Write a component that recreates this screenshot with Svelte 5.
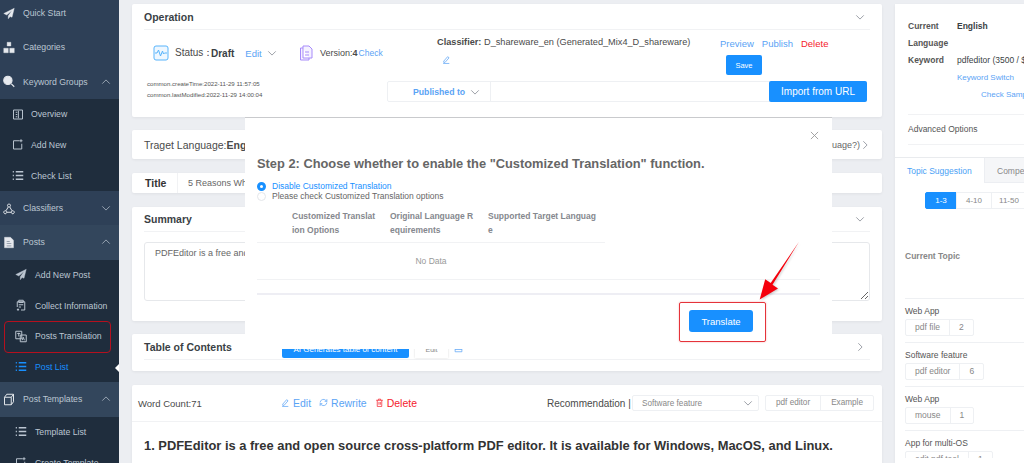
<script>
	const icons = {
		plane: 'M15 1 1 8l4 2 7-6-5 7v4l2.5-3 2.5 1z',
		tree: 'M5.5 1h5v5h-5zM1 9h6v6H1zM9 9h6v6H9z',
		search: 'M6.500 1a5.500 5.500 0 1 0 0 11 5.500 5.500 0 0 0 0-11zM10.500 10.500 15 15',
		box: 'M2 2h12v12H2zM5 5h2M5 8h2M5 11h2M8.5 3v10',
		add: 'M10 3H2v11h11V7M12 1v4M10 3h4',
		list: 'M1 3h1.5M5 3h10M1 8h1.5M5 8h10M1 13h1.5M5 13h10',
		nodes: 'M8 2a2 2 0 1 0 .01 0zM3 11a2 2 0 1 0 .01 0zM13 11a2 2 0 1 0 .01 0zM7 6l-3 5M9 6l3 5M5 13h6',
		doc: 'M2 1h8l4 4v10H2zM5 6h4v1H5zM5 9h6v1H5zM5 12h6v1H5z',
		clip: 'M3 3h10v11H8M5 1h6v3H5zM3 3v7M5 7h6M5 10h3M4 12v3M2.5 13.5h3',
		trans: 'M1 1h8v10H1zM7 6h8v9H7zM3 4h4M5 3v5M9.5 13l1.5-4 1.5 4',
		cube: 'M2 5h9v10H2zM2 5l3-4h9l-3 4M11 15l3-4V1'
	};

	const menu = [
		{ label: 'Quick Start', icon: 'plane', solid: true },
		{ label: 'Categories', icon: 'tree', solid: true },
		{
			label: 'Keyword Groups',
			icon: 'search',
			solid: true,
			arrow: 'up',
			narrow: true,
			children: [
				{ label: 'Overview', icon: 'box' },
				{ label: 'Add New', icon: 'add' },
				{ label: 'Check List', icon: 'list' }
			]
		},
		{ label: 'Classifiers', icon: 'nodes', arrow: 'down' },
		{
			label: 'Posts',
			icon: 'doc',
			solid: true,
			arrow: 'up',
			open: true,
			children: [
				{ label: 'Add New Post', icon: 'plane', solid: true },
				{ label: 'Collect Information', icon: 'clip' },
				{ label: 'Posts Translation', icon: 'trans' },
				{ label: 'Post List', icon: 'list', active: true }
			]
		},
		{
			label: 'Post Templates',
			icon: 'cube',
			arrow: 'up',
			open: true,
			children: [
				{ label: 'Template List', icon: 'list' },
				{ label: 'Create Template', icon: 'add' }
			]
		}
	];

	const topics = [
		{ group: 'Web App', name: 'pdf file', count: 2 },
		{ group: 'Software feature', name: 'pdf editor', count: 6 },
		{ group: 'Web App', name: 'mouse', count: 1 },
		{ group: 'App for multi-OS', name: 'edit pdf tool', count: 1 }
	];
</script>

{#snippet icon(name, solid = false)}
	<svg class="ico {name}" class:solid viewBox="0 0 16 16"><path d={icons[name]} fill-rule="evenodd" /></svg>
{/snippet}

{#snippet chevron(dir = 'down')}
	<svg class="chev {dir}" viewBox="0 0 12 12"><path d="M1.500 4 6 8.500 10.500 4" /></svg>
{/snippet}

<div class="page">
	<aside class="sidebar">
		{#each menu as item}
			<div class="item" class:open={item.open}>
				{@render icon(item.icon, item.solid)}
				<span>{item.label}</span>
				{#if item.arrow}{@render chevron(item.arrow)}{/if}
			</div>
			{#if item.children}
				<div class="sub" class:narrow={item.narrow}>
					{#each item.children as child}
						<div class="subitem" class:active={child.active}>
							{@render icon(child.icon, child.solid)}
							<span>{child.label}</span>
						</div>
					{/each}
				</div>
			{/if}
		{/each}
		<div class="ring"></div>
		<div class="notch"></div>
	</aside>

	<main class="main">
		<section class="card operation">
			<header class="head">
				<h3>Operation</h3>
				{@render chevron('down')}
			</header>
			<div class="op-top">
				<div class="status">
					<svg class="big" viewBox="0 0 16 16">
						<rect x="1" y="1" width="14" height="14" rx="2" stroke="#58b4fb" fill="#eef7ff" />
						<path d="M2 8h2l1.500-3 2 6 2-5 1 3 1-1h2.500" stroke="#58b4fb" fill="none" />
					</svg>
					<span class="status-label">Status：</span>
					<b>Draft</b>
					<a class="link edit">Edit</a>
					{@render chevron('down')}
				</div>
				<div class="version">
					<svg class="big" viewBox="0 0 16 16">
						<path d="M5 1h6l3 3v9H5zM5 3H2.500v12H11v-2M7 7h4M7 10h4" stroke="#a78bfa" fill="#f5f2ff" />
					</svg>
					<span>Version:<b>4</b></span><a class="link">Check</a>
				</div>
				<div class="classifier">
					<div><b>Classifier:</b> D_shareware_en (Generated_Mix4_D_shareware)</div>
					<svg class="pen" viewBox="0 0 16 16"><path d="M3 11 10 3l2.500 2-7 8H3zM2 15h11" /></svg>
				</div>
				<div class="actions">
					<div class="action-links">
						<a class="link">Preview</a>
						<a class="link">Publish</a>
						<a class="danger">Delete</a>
					</div>
					<button class="btn save">Save</button>
				</div>
			</div>
			<div class="op-bottom">
				<div class="dates">
					<div>common.createTime:2022-11-29 11:57:05</div>
					<div>common.lastModified:2022-11-29 14:00:04</div>
				</div>
				<div class="publish-bar">
					<div class="published"><b>Published to</b>{@render chevron('down')}</div>
					<button class="btn import">Import from URL</button>
				</div>
			</div>
		</section>

		<section class="card target">
			<span>Traget Language:<b>English</b></span>
			<span class="target-side">(Change Target Language?){@render chevron('side')}</span>
		</section>

		<section class="card title-row">
			<b>Title</b>
			<span>5 Reasons Why You Should Use PDFEditor</span>
		</section>

		<section class="card summary">
			<header class="head">
				<h3>Summary</h3>
				{@render chevron('down')}
			</header>
			<textarea class="area" readonly value="PDFEditor is a free and open source cross-platform PDF editor."></textarea>
		</section>

		<section class="card toc">
			<header class="head">
				<h3>Table of Contents</h3>
				<div class="toc-tools">
					<button class="btn ai">AI Generates table of content</button>
					<button class="toc-edit">Edit</button>
					<svg class="pen" viewBox="0 0 16 16"><path d="M2 4h12v8H2zM2 8h12" /></svg>
				</div>
				{@render chevron('side')}
			</header>
		</section>

		<section class="card words">
			<div class="words-head">
				<span class="count">Word Count:71</span>
				<div class="tools">
					<a class="link"><svg class="pen" viewBox="0 0 16 16"><path d="M3 11 10 3l2.500 2-7 8H3zM2 15h11" /></svg>Edit</a>
					<a class="link"><svg class="pen" viewBox="0 0 16 16"><path d="M2 8a6 6 0 0 1 10-4l2 2M14 8a6 6 0 0 1-10 4l-2-2M14 2v4h-4M2 14v-4h4" /></svg>Rewrite</a>
					<a class="danger"><svg class="pen" viewBox="0 0 16 16"><path d="M2 4h12M6 4V2h4v2M4 4v11h8V4M7 7v5M9.500 7v5" /></svg>Delete</a>
				</div>
				<span class="rec">Recommendation |</span>
				<div class="select"><span>Software feature</span>{@render chevron('down')}</div>
				<div class="pair"><span>pdf editor</span><span>Example</span></div>
			</div>
			<h2>1. PDFEditor is a free and open source cross-platform PDF editor. It is available for Windows, MacOS, and Linux.</h2>
		</section>
	</main>

	<aside class="rail">
		<section class="info">
			<div class="kv"><b class="k">Current</b><b class="v">English</b></div>
			<div class="kv"><b class="k">Language</b></div>
			<div class="kv"><b class="k">Keyword</b><span class="v">pdfeditor (3500 / $0.85)</span></div>
			<a class="link switch">Keyword Switch</a>
			<a class="link sample">Check Sample</a>
			<div class="advanced">Advanced Options</div>
		</section>
		<section class="suggest">
			<div class="tabs">
				<div class="tab on">Topic Suggestion</div>
				<div class="tab">Competitor</div>
			</div>
			<div class="ranges">
				<span class="sel">1-3</span><span>4-10</span><span>11-50</span>
			</div>
			<div class="current">Current Topic</div>
			{#each topics as t}
				<div class="topic">
					<div class="group">{t.group}</div>
					<div class="tag"><span>{t.name}</span><span>{t.count}</span></div>
				</div>
			{/each}
		</section>
	</aside>

	<div class="modal">
		<button class="close" aria-label="Close">
			<svg viewBox="0 0 10 10"><path d="M1 1l8 8M9 1 1 9" /></svg>
		</button>
		<h1>Step 2: Choose whether to enable the "Customized Translation" function.</h1>
		<div class="radio on"><i></i>Disable Customized Translation</div>
		<div class="radio"><i></i>Please check Customized Translation options</div>
		<div class="table">
			<div class="thead">
				<span>Customized Translat ion Options</span>
				<span>Original Language R equirements</span>
				<span class="wide">Supported Target Languag e</span>
			</div>
		</div>
		<div class="nodata">No Data</div>
		<div class="foot-line"></div>
		<div class="foot"><button class="btn translate">Translate</button></div>
	</div>

	<div class="callout"></div>
	<svg class="arrow" viewBox="0 0 50 70">
		<path d="M48 2 17 47l-6-4-6 22 20-12-6-4z" fill="#f5000c" />
	</svg>
</div>

<style>
	:global(body) {
		margin: 0;
		font-family: 'Liberation Sans', Arial, sans-serif;
	}

	.page {
		position: relative;
		display: flex;
		height: 463px;
		width: 1024px;
		overflow: hidden;
		background: #eceef2;
		color: #4a4a4a;
		font-size: 10px;
	}

	h1, h2, h3 {
		margin: 0;
	}

	button {
		font-family: inherit;
		border: none;
	}

	.ico {
		width: 12px;
		height: 13px;
		flex-shrink: 0;
		fill: none;
		stroke: currentColor;
		stroke-width: 1.3;
	}

	.ico.solid {
		fill: currentColor;
		stroke-width: 0.5;
	}

	.ico.list {
		stroke-width: 2;
	}

	.ico.search {
		stroke-width: 1.500;
	}

	.chev {
		width: 10px;
		height: 10px;
		flex-shrink: 0;
		fill: none;
		stroke: #8a8f97;
		stroke-width: 1;
	}

	.chev.up {
		transform: rotate(180deg);
	}

	.chev.side {
		transform: rotate(-90deg);
	}

	.head > .chev {
		margin-right: 5px;
	}

	/* sidebar */
	.sidebar {
		position: relative;
		flex: 0 0 119px;
		margin-top: -4px;
		height: 467px;
		overflow: hidden;
		background: #2e4057;
		color: #bcc6d2;
		font-size: 8.700px;
	}

	.item {
		display: flex;
		align-items: center;
		height: 34.3px;
		padding: 0 6px 0 3px;
		gap: 8px;
		box-sizing: border-box;
	}

	.item .ico {
		color: #e6e9ee;
	}

	.item span {
		flex: 1;
		white-space: nowrap;
	}

	.item .chev {
		margin-right: 2px;
		stroke: #aab4c0;
	}

	.item.open {
		background: #33465c;
	}

	.sub {
		background: #1f2d3d;
	}

	.subitem {
		display: flex;
		align-items: center;
		gap: 8px;
		height: 30.7px;
		padding-left: 15px;
		white-space: nowrap;
	}

	.sub.narrow .subitem {
		padding-left: 12px;
		gap: 7px;
	}

	.subitem.active {
		color: #1890ff;
	}

	.ring {
		position: absolute;
		left: 4px;
		top: 325px;
		width: 105px;
		height: 30px;
		border: 1px solid #b5101e;
		border-radius: 4px;
	}

	.notch {
		position: absolute;
		right: 0;
		top: 368px;
		border: 4px solid transparent;
		border-right-color: #fff;
		border-left-width: 0;
	}

	/* main column */
	.main {
		flex: 0 0 750px;
		min-width: 0;
		margin: 4px 0 0 13px;
		display: flex;
		flex-direction: column;
		gap: 13px;
	}

	.card {
		background: #fff;
		border-radius: 2px;
		box-shadow: 0 1px 3px rgba(0, 0, 0, 0.06);
		overflow: hidden;
	}

	.head {
		display: flex;
		align-items: center;
		justify-content: space-between;
		height: 25px;
		margin: 0 12px;
		border-bottom: 1px solid #f1f2f4;
	}

	.head h3 {
		font-size: 10.500px;
		color: #3a3f45;
	}

	.operation {
		flex: 0 0 113px;
	}

	.op-top {
		display: flex;
		height: 51px;
		padding-left: 21px;
		box-sizing: border-box;
	}

	.status, .version {
		display: flex;
		align-items: center;
		align-self: flex-start;
		margin-top: 14px;
		height: 18px;
	}

	.status {
		width: 145px;
	}

	.big {
		width: 16px;
		height: 16px;
		margin-right: 6px;
		flex-shrink: 0;
	}

	.status-label {
		width: 36px;
		white-space: nowrap;
	}

	.status b {
		margin-right: 11px;
		color: #3a3f45;
	}

	.edit {
		margin-right: 5px;
		font-size: 9.500px;
	}

	.link {
		color: #5aa3f5;
		white-space: nowrap;
	}

	.danger {
		color: #f5222d;
		white-space: nowrap;
	}

	.version {
		width: 139px;
		white-space: nowrap;
		font-size: 9px;
	}

	.version .link {
		font-size: 8.500px;
		margin-left: 1px;
	}

	.classifier {
		width: 283px;
		padding-top: 7px;
		box-sizing: border-box;
		white-space: nowrap;
		font-size: 9.200px;
	}

	.classifier .pen {
		margin: 8px 0 0 5px;
		display: block;
	}

	.pen {
		width: 9px;
		height: 9px;
		fill: none;
		stroke: #5aa3f5;
		stroke-width: 1.3;
	}

	.actions {
		display: flex;
		flex-direction: column;
		padding-top: 8px;
	}

	.action-links {
		display: flex;
		gap: 8px;
		font-size: 9.500px;
	}

	.btn {
		background: #1890ff;
		color: #fff;
		border-radius: 2px;
	}

	.save {
		width: 36px;
		height: 20px;
		margin: 6px 0 0 6px;
		font-size: 7.500px;
		padding: 0;
	}

	.op-bottom {
		display: flex;
	}

	.dates {
		width: 255px;
		margin-top: -3px;
		padding-left: 15px;
		box-sizing: border-box;
		font-size: 6.100px;
		line-height: 11px;
		color: #555;
		white-space: nowrap;
	}

	.publish-bar {
		display: flex;
		width: 480px;
		height: 21px;
		box-sizing: border-box;
		border: 1px solid #eef0f3;
		border-radius: 2px;
	}

	.published {
		display: flex;
		align-items: center;
		gap: 5px;
		width: 103px;
		box-sizing: border-box;
		padding-left: 25px;
		border-right: 1px solid #eef0f3;
		color: #5aa3f5;
		font-size: 8.700px;
		white-space: nowrap;
	}

	.import {
		margin: -1px -1px -1px auto;
		width: 98px;
		font-size: 10px;
		padding: 0;
	}

	.target {
		display: flex;
		flex: 0 0 29px;
		align-items: center;
		justify-content: space-between;
		padding: 0 12px;
		font-size: 10.500px;
		white-space: nowrap;
	}

	.target-side {
		display: flex;
		align-items: center;
		font-size: 9px;
		color: #666;
	}

	.title-row {
		display: flex;
		flex: 0 0 20px;
		align-items: center;
		margin-top: 1px;
		white-space: nowrap;
	}

	.title-row b {
		width: 46px;
		height: 20px;
		line-height: 20px;
		box-sizing: border-box;
		padding-left: 13px;
		border-right: 1px solid #f1f2f4;
		font-size: 10.500px;
		color: #333;
	}

	.title-row span {
		margin-left: 10px;
		font-size: 9px;
		color: #666;
	}

	.summary {
		flex: 0 0 114px;
		margin-top: 1px;
	}

	.summary .head {
		height: 24px;
	}

	.area {
		display: block;
		margin: 10px 12px 0;
		width: 726px;
		height: 59px;
		padding: 5px 10px;
		box-sizing: border-box;
		border: 1px solid #e6e8eb;
		border-radius: 3px;
		font-family: inherit;
		font-size: 9px;
		color: #666;
		resize: vertical;
		outline: none;
	}

	.toc {
		flex: 0 0 37px;
	}

	.toc .head {
		position: relative;
	}

	.toc-tools {
		position: absolute;
		left: 138px;
		top: 6px;
		display: flex;
		align-items: center;
		gap: 6px;
	}

	.ai {
		width: 127px;
		height: 18px;
		font-size: 8px;
		padding: 0;
	}

	.toc-edit {
		width: 33px;
		height: 18px;
		background: #fff;
		font-size: 7px;
		color: #888;
		box-shadow: 0 0 2px rgba(0, 0, 0, 0.15);
	}

	.words {
		flex: 1;
		min-height: 90px;
		margin-top: 1px;
	}

	.words-head {
		display: flex;
		align-items: center;
		height: 36px;
		padding-left: 6px;
		border-bottom: 1px solid #f1f2f4;
		white-space: nowrap;
	}

	.count {
		width: 143px;
		font-size: 9.500px;
	}

	.tools {
		display: flex;
		gap: 8px;
		width: 266px;
		font-size: 10.500px;
	}

	.tools .pen {
		margin-right: 3px;
	}

	.tools .danger .pen {
		stroke: #f5222d;
	}

	.rec {
		width: 85px;
		font-size: 10px;
	}

	.select {
		display: flex;
		align-items: center;
		justify-content: space-between;
		width: 127px;
		height: 16px;
		box-sizing: border-box;
		padding: 0 5px 0 9px;
		border: 1px solid #eef0f3;
		border-radius: 2px;
		font-size: 8.200px;
		color: #888;
	}

	.pair {
		display: flex;
		margin-left: 6px;
		height: 16px;
		box-sizing: border-box;
		border: 1px solid #eef0f3;
		border-radius: 2px;
		font-size: 8.200px;
		color: #888;
		line-height: 14px;
	}

	.pair span {
		padding: 0 10px;
	}

	.pair span + span {
		border-left: 1px solid #eef0f3;
	}

	.words h2 {
		padding: 16px 12px;
		font-size: 12.900px;
		color: #333;
		white-space: nowrap;
	}

	/* right column */
	.rail {
		flex: 0 0 300px;
		margin: 4px 0 0 13px;
		background: #fff;
		box-shadow: 0 1px 3px rgba(0, 0, 0, 0.06);
	}

	.info {
		height: 154px;
		padding: 14px 0 0 13px;
		box-sizing: border-box;
		border-bottom: 1px solid #e9ebee;
		position: relative;
		font-size: 8.500px;
		white-space: nowrap;
	}

	.kv {
		display: flex;
		height: 17px;
		line-height: 17px;
		color: #555;
	}

	.k {
		width: 49px;
	}

	.v {
		color: #3a3f45;
	}

	.switch, .sample {
		display: block;
		height: 17px;
		line-height: 17px;
		font-size: 8px;
	}

	.switch {
		margin-left: 49px;
	}

	.sample {
		margin-left: 73px;
	}

	.advanced {
		margin-top: 11px;
		height: 29px;
		line-height: 29px;
		border-top: 1px solid #f1f2f4;
		border-bottom: 1px solid #f1f2f4;
		color: #555;
	}

	.suggest {
		height: 300px;
		overflow: hidden;
	}

	.tabs {
		display: flex;
		height: 25px;
		line-height: 26px;
		font-size: 8.500px;
		white-space: nowrap;
	}

	.tab {
		padding: 0 12px;
		background: #f5f6f8;
		color: #888;
		flex: 1;
		border-bottom: 1px solid #eceef2;
	}

	.tab.on {
		flex: 0 0 90px;
		box-sizing: border-box;
		background: #fff;
		color: #4a9ff5;
		border-right: 1px solid #eceef2;
		border-bottom: none;
	}

	.ranges {
		display: flex;
		margin: 9px 0 0 31px;
		height: 17px;
		line-height: 15px;
		font-size: 8px;
		color: #888;
	}

	.ranges span {
		box-sizing: border-box;
		width: 36px;
		text-align: center;
		border: 1px solid #eef0f3;
		margin-left: -1px;
	}

	.ranges .sel {
		width: 32px;
		background: #1890ff;
		border-color: #1890ff;
		color: #fff;
		border-radius: 2px 0 0 2px;
	}

	.current {
		margin: 42px 0 0 10px;
		height: 47px;
		font-size: 8.500px;
		font-weight: bold;
		color: #888;
	}

	.topic {
		height: 44px;
		margin-left: 10px;
		border-top: 1px solid #eef0f3;
		box-sizing: border-box;
		padding-top: 7px;
		font-size: 8.500px;
		color: #555;
	}

	.group {
		height: 13px;
		line-height: 11px;
	}

	.tag {
		display: inline-flex;
		height: 17px;
		line-height: 15px;
		box-sizing: border-box;
		border: 1px solid #eef0f3;
		border-radius: 2px;
		color: #888;
		font-size: 8.500px;
	}

	.tag span {
		padding: 0 9px;
	}

	.tag span + span {
		padding: 0 9px;
		border-left: 1px solid #eef0f3;
	}

	/* modal */
	.modal {
		position: absolute;
		left: 245px;
		top: 117px;
		width: 587px;
		height: 232px;
		box-sizing: border-box;
		background: #fff;
		border-top: 1px solid #c9cacd;
		padding: 0 12px;
	}

	.close {
		position: absolute;
		right: 13px;
		top: 13px;
		width: 9px;
		height: 9px;
		padding: 0;
		background: none;
		display: flex;
	}

	.close svg {
		fill: none;
		stroke: #9a9a9a;
	}

	.modal h1 {
		margin-top: 37px;
		font-size: 12.850px;
		line-height: 18px;
		color: #666;
		white-space: nowrap;
	}

	.radio {
		display: flex;
		align-items: center;
		gap: 6px;
		height: 10px;
		font-size: 8.500px;
		color: #666;
		white-space: nowrap;
	}

	.modal h1 + .radio {
		margin-top: 8px;
	}

	.radio i {
		width: 9px;
		height: 9px;
		box-sizing: border-box;
		border: 1px solid #e4e6ea;
		border-radius: 50%;
		flex-shrink: 0;
	}

	.radio.on {
		color: #1890ff;
	}

	.radio.on i {
		border: 3px solid #1890ff;
	}

	.table {
		width: 348px;
		border-bottom: 1px solid #f1f2f4;
		margin-top: 2px;
	}

	.thead {
		display: grid;
		grid-template-columns: 98px 98px 110px;
		padding-left: 35px;
		height: 39px;
		align-items: center;
		font-size: 8.500px;
		font-weight: bold;
		line-height: 14px;
		color: #85888e;
	}

	.thead span {
		width: 86px;
		word-break: break-all;
	}

	.thead .wide {
		width: 110px;
	}

	.nodata {
		width: 348px;
		height: 36px;
		line-height: 36px;
		text-align: center;
		font-size: 8.500px;
		color: #999;
	}

	.foot-line {
		height: 16px;
		width: 563px;
		box-sizing: border-box;
		border-top: 1px solid #f1f2f4;
		border-bottom: 2px solid #eeeef4;
	}

	.foot {
		display: flex;
		justify-content: flex-end;
		padding: 15px 67px 0 0;
	}

	.translate {
		width: 64px;
		height: 22px;
		font-size: 9.500px;
		padding: 0;
		border-radius: 3px;
	}

	.callout {
		position: absolute;
		left: 679px;
		top: 302px;
		width: 87px;
		height: 40px;
		box-sizing: border-box;
		border: 1px solid #e5333a;
		border-radius: 2px;
		box-shadow: 0 0 2px rgba(229, 51, 58, 0.4);
	}

	.arrow {
		position: absolute;
		left: 755px;
		top: 240px;
		width: 46px;
		height: 64px;
		filter: drop-shadow(1px 1px 1px rgba(0, 0, 0, 0.2));
	}
</style>
